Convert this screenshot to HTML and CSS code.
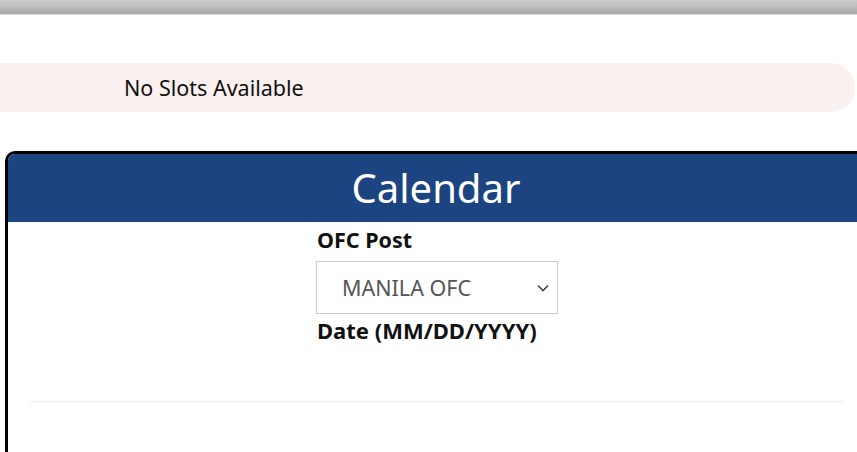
FILE: index.html
```html
<!DOCTYPE html>
<html lang="en">
<head>
    <meta charset="UTF-8">
    <meta name="viewport" content="width=device-width, initial-scale=1.0">
    <title>Calendar</title>
    <link rel="stylesheet" href="styles.css">
</head>
<body>
    <div class="top-bar"></div>

    <div class="notice">
        <span>No Slots Available</span>
    </div>

    <div class="calendar-card">
        <div class="calendar-header">Calendar</div>
        <div class="calendar-body">
            <div class="form-col">
                <label class="field-label" for="ofc-post">OFC Post</label>
                <div class="select-box">
                    <select id="ofc-post">
                        <option>MANILA OFC</option>
                    </select>
                    <svg class="chevron" width="12" height="8" viewBox="0 0 12 8">
                        <path d="M1 1.5 L6 6.5 L11 1.5" fill="none" stroke="#444" stroke-width="1.6"/>
                    </svg>
                </div>
                <label class="field-label date-label">Date (MM/DD/YYYY)</label>
            </div>
            <hr class="divider">
        </div>
    </div>
</body>
</html>
```

FILE: styles.css
```css
html, body {
    overflow-x: hidden;
}

body {
    margin: 0;
    font-family: 'Noto Sans', 'Open Sans', Arial, sans-serif;
    color: #111;
    background: #fff;
}

.top-bar {
    height: 14px;
    background: linear-gradient(#cdcdcd, #a9a9a9);
    border-bottom: 1px solid #dcdcdc;
}

.notice {
    margin-top: 48px;
    width: 855px;
    height: 49px;
    box-sizing: border-box;
    padding-left: 124px;
    background-color: #f9f0ef;
    border-radius: 0 25px 25px 0;
    display: flex;
    align-items: center;
    font-size: 21.5px;
}

.calendar-card {
    margin: 39px 0 0 5px;
    width: 862px;
    height: 320px;
    box-sizing: border-box;
    border: 3px solid #000;
    border-bottom: none;
    border-radius: 10px 10px 0 0;
    overflow: hidden;
}

.calendar-header {
    height: 68px;
    background-color: #1b4480;
    color: #fff;
    font-size: 40px;
    line-height: 68px;
    text-align: center;
}

.calendar-body {
    padding: 0 20px 0 22px;
}

.form-col {
    width: 242px;
    margin: 0 auto;
    padding-top: 3px;
}

.field-label {
    display: block;
    font-weight: bold;
    font-size: 21.5px;
    line-height: 29px;
    padding-left: 1px;
    white-space: nowrap;
}

.date-label {
    font-size: 22px;
}

.select-box {
    position: relative;
    margin: 7px 0 2px;
}

.select-box select {
    display: block;
    width: 242px;
    height: 53px;
    box-sizing: border-box;
    border: 1px solid #ccc;
    border-radius: 0;
    background: #fff;
    padding-left: 25px;
    font-family: inherit;
    font-size: 21.5px;
    color: #555;
    appearance: none;
    -webkit-appearance: none;
}

.chevron {
    position: absolute;
    right: 9px;
    top: 23px;
    pointer-events: none;
}

.divider {
    margin: 56px 0 0;
    border: none;
    border-top: 1px solid #eee;
}
```
